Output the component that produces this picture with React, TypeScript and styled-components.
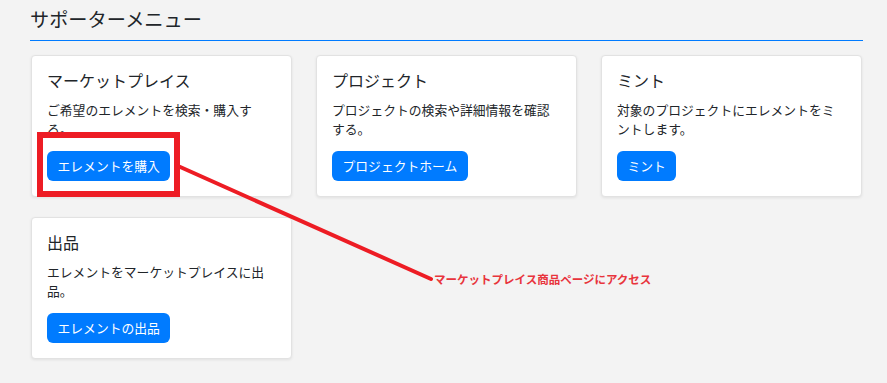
import React from "react";
import styled, { createGlobalStyle } from "styled-components";

const GlobalStyle = createGlobalStyle`
  html, body {
    margin: 0;
    padding: 0;
    background: #f3f3f3;
    font-family: "Noto Sans CJK JP", "Noto Sans", sans-serif;
    color: #212529;
  }
  * { box-sizing: border-box; }
`;

const Page = styled.div`
  position: relative;
  width: 887px;
  height: 383px;
  overflow: hidden;
  padding-left: 30px;
`;

const Section = styled.section`
  width: 833px;
  margin-bottom: 15px;
`;

const Heading = styled.h2`
  margin: 0;
  padding: 4px 0 6px 0;
  font-size: 19.2px;
  line-height: 30px;
  font-weight: 400;
  color: #212529;
  border-bottom: 1px solid #007bff;
`;

const CardGrid = styled.div`
  margin-top: 14px;
  padding: 0 1px;
  display: grid;
  grid-template-columns: repeat(3, 261px);
  column-gap: 24px;
  row-gap: 20px;
`;

const Card = styled.div`
  background: #ffffff;
  border: 1px solid #e2e2e2;
  border-radius: 4px;
  box-shadow: 0 1px 3px rgba(0, 0, 0, 0.08);
  padding: 15px 15px 16px;
  height: 142px;
  display: flex;
  flex-direction: column;
  align-items: flex-start;
`;

const CardTitle = styled.h3`
  margin: 0 0 10px;
  font-size: 16px;
  line-height: 19.2px;
  font-weight: 400;
  color: #212529;
`;

const CardText = styled.p`
  margin: 0;
  font-size: 12.8px;
  line-height: 19.2px;
  color: #212529;
  height: 38.4px;
`;

const Button = styled.button`
  margin-top: 12px;
  height: 30px;
  padding: 0 10.5px;
  border: none;
  border-radius: 6px;
  background: #007bff;
  color: #ffffff;
  font-family: inherit;
  font-size: 12.8px;
  line-height: 30px;
  cursor: pointer;
`;

const Overlay = styled.svg`
  position: absolute;
  left: 0;
  top: 0;
  pointer-events: none;
`;

const Callout = styled.span`
  position: absolute;
  left: 434px;
  top: 270px;
  font-size: 11.5px;
  line-height: 18px;
  font-weight: 700;
  color: #e8343c;
  white-space: nowrap;
`;

type Item = { title: string; text: string; button: string };

const items: Item[] = [
  { title: "マーケットプレイス", text: "ご希望のエレメントを検索・購入する。", button: "エレメントを購入" },
  { title: "プロジェクト", text: "プロジェクトの検索や詳細情報を確認する。", button: "プロジェクトホーム" },
  { title: "ミント", text: "対象のプロジェクトにエレメントをミントします。", button: "ミント" },
  { title: "出品", text: "エレメントをマーケットプレイスに出品。", button: "エレメントの出品" },
];

export default function App() {
  return (
    <>
      <GlobalStyle />
      <Page>
        <Section>
          <Heading>サポーターメニュー</Heading>
          <CardGrid>
            {items.map((it) => (
              <Card key={it.title}>
                <CardTitle>{it.title}</CardTitle>
                <CardText>{it.text}</CardText>
                <Button>{it.button}</Button>
              </Card>
            ))}
          </CardGrid>
        </Section>
        <Section>
          <Heading>クリエイターメニュー</Heading>
        </Section>
        <Overlay width="887" height="383" viewBox="0 0 887 383">
          <rect x="40" y="135" width="137" height="59" fill="none" stroke="#ed1c24" strokeWidth="6" />
          <line x1="178" y1="166" x2="431" y2="279" stroke="#ed1c24" strokeWidth="4" strokeLinecap="round" />
        </Overlay>
        <Callout>マーケットプレイス商品ページにアクセス</Callout>
      </Page>
    </>
  );
}
